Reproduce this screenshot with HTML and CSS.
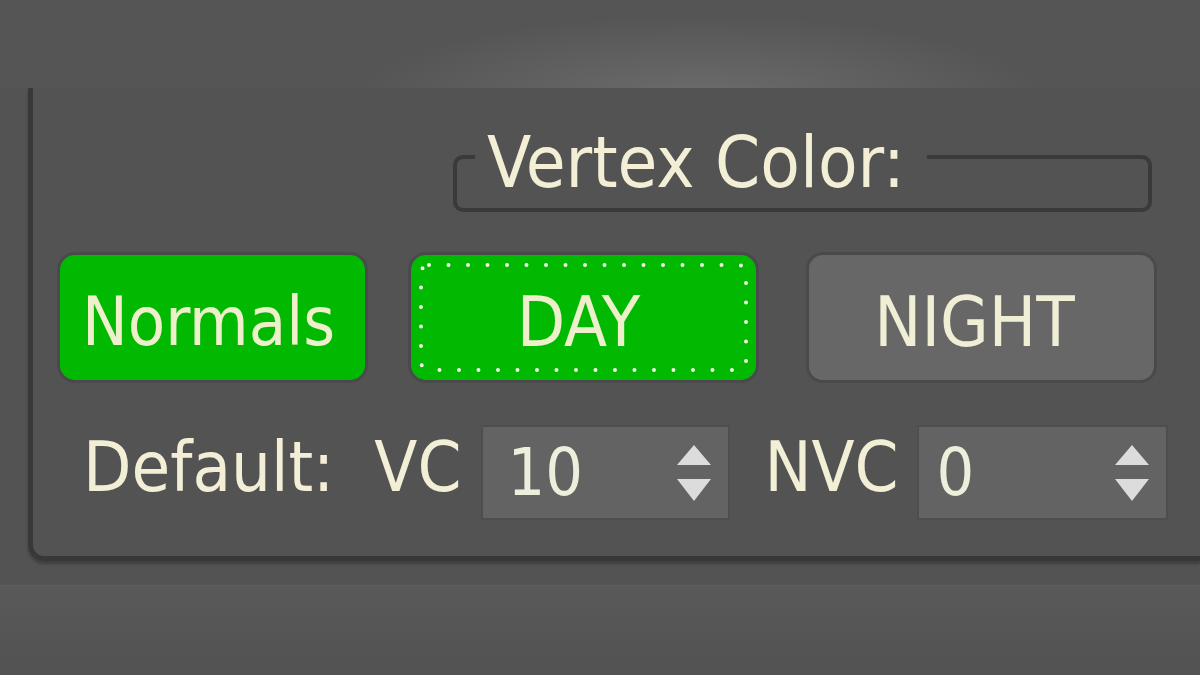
FILE: index.html
```html
<!DOCTYPE html>
<html lang="en">
<head>
  <meta charset="UTF-8">
  <title>Vertex Color</title>
  <link rel="stylesheet" href="styles.css">
</head>
<body>
  <div class="band-top"></div>

  <div class="panel">
    <div class="rollout">
      <fieldset class="group">
        <legend>Vertex Color:</legend>
        <div class="group-body"></div>
      </fieldset>

      <div class="btn-row">
        <button class="btn btn-on btn-normals">Normals</button>
        <button class="btn btn-on btn-day">
          DAY
          <svg class="focus-ring" viewBox="0 0 329 109" preserveAspectRatio="none">
            <rect x="2" y="2" width="325" height="105" rx="8" ry="8" fill="none" stroke="#f4f4e8" stroke-width="4" stroke-linecap="round" stroke-dasharray="0 19.5"/>
          </svg>
        </button>
        <button class="btn btn-night">NIGHT</button>
      </div>

      <div class="spin-row">
        <span class="lbl lbl-default">Default:</span>
        <span class="lbl lbl-vc">VC</span>
        <div class="spinner">
          <span class="spin-val">10</span>
          <svg class="spin-arrows" width="36" height="58" viewBox="0 0 36 58">
            <polygon points="18,0 35,20 1,20" fill="#dcdcdc"/>
            <polygon points="1,34 35,34 18,56" fill="#dcdcdc"/>
          </svg>
        </div>
        <span class="lbl lbl-nvc">NVC</span>
        <div class="spinner spinner-wide">
          <span class="spin-val">0</span>
          <svg class="spin-arrows" width="36" height="58" viewBox="0 0 36 58">
            <polygon points="18,0 35,20 1,20" fill="#dcdcdc"/>
            <polygon points="1,34 35,34 18,56" fill="#dcdcdc"/>
          </svg>
        </div>
      </div>
    </div>
  </div>

  <div class="band-bottom"></div>
</body>
</html>
```

FILE: styles.css
```css
body {
  margin: 0;
  background: #545454;
  font-family: "DejaVu Sans Condensed", "DejaVu Sans", sans-serif;
  font-stretch: condensed;
  color: #f3eed6;
  overflow: hidden;
}

.band-top {
  height: 88px;
  background: radial-gradient(ellipse 340px 80px at 700px 95px, #6b6b6b 0%, #606060 50%, #555555 100%);
}

.panel {
  height: 497px;
  background: #535353;
  padding-left: 28px;
  box-sizing: border-box;
}

.rollout {
  height: 473px;
  box-sizing: border-box;
  padding-top: 28px;
  border-left: 5px solid #383838;
  border-bottom: 5px solid #383838;
  border-bottom-left-radius: 16px;
  box-shadow: 0 3px 3px rgba(0,0,0,0.25);
}

.group {
  margin: 0 0 0 420px;
  width: 699px;
  box-sizing: border-box;
  padding: 0 0 0 18px;
  border: 4px solid #3a3a3a;
  border-radius: 10px;
}
.group legend {
  padding: 10px 22px 0 12px;
  font-size: 72px;
  line-height: 72px;
}
.group-body {
  height: 10px;
}

.btn-row {
  display: flex;
  gap: 46px;
  margin-top: 43px;
  padding-left: 27px;
}
.btn {
  position: relative;
  height: 125px;
  padding: 8px 0 0;
  border: none;
  border-radius: 15px;
  font-family: inherit;
  font-stretch: condensed;
  font-size: 68px;
  line-height: 70px;
  color: #f0eed4;
  box-shadow: 0 0 0 3px #4a4a4c;
}
.btn-on {
  background: #00b900;
  color: #eef0cc;
}
.btn-normals {
  width: 305px;
  padding-right: 8px;
}
.btn-day {
  width: 345px;
  padding-right: 10px;
  font-size: 70px;
}
.btn-night {
  width: 345px;
  margin-left: 7px;
  padding-right: 14px;
  font-size: 70px;
  background: #676767;
  border-radius: 14px;
}
.focus-ring {
  position: absolute;
  left: 8px;
  top: 8px;
  width: calc(100% - 16px);
  height: calc(100% - 16px);
}

.spin-row {
  display: flex;
  align-items: center;
  margin-top: 47px;
  padding-left: 50px;
}
.lbl {
  font-size: 70px;
  line-height: 70px;
  margin-bottom: 12px;
}
.lbl-default {
  margin-right: 40px;
}
.lbl-vc {
  margin-right: 22px;
}
.lbl-nvc {
  margin-left: 36px;
  margin-right: 20px;
}
.spinner {
  width: 245px;
  height: 91px;
  box-sizing: border-box;
  display: flex;
  align-items: center;
  justify-content: space-between;
  padding: 0 16px 0 24px;
  background: #636363;
  box-shadow: 0 0 0 2px #4e4e4e;
}
.spinner-wide {
  width: 247px;
  padding-left: 18px;
}
.spin-val {
  font-size: 66px;
  line-height: 70px;
  color: #eeeedc;
}
.spin-arrows {
  display: block;
  margin-top: 2px;
}

.band-bottom {
  height: 90px;
  border-top: 1px solid #5e5e5e;
  background: linear-gradient(#595959, #525252);
}
```
